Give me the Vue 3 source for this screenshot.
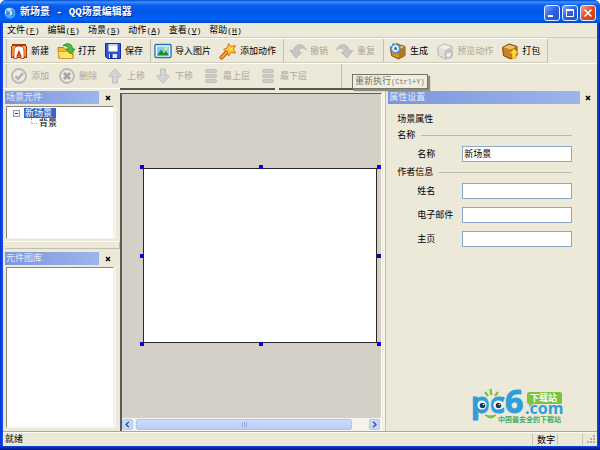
<script setup>
import { ref } from 'vue'

const menus = [
  ['文件', 'F'], ['编辑', 'E'], ['场景', 'S'], ['动作', 'A'], ['查看', 'V'], ['帮助', 'H'],
]

const cube = (a, b, c, s) =>
  `<path d="M1.500 5.500 8 2l8 2.500v9l-6.500 3.500-7-3.500z" fill="${b}" stroke="${s}" stroke-linejoin="round"/><path d="M2.500 5.500 8 2.800l7 2-5.500 2.700z" fill="${a}"/><path d="M10 8v8.500l5.500-3V5z" fill="${c}"/>`
const undoPath = 'M17.500 8C15 1 6.500.5 4.500 8.500H1L7 16l5.500-5.500-3-1C10.500 5.500 14 5 17.500 8z'
const layers = '<g fill="#c9c9c6" stroke="#b8b8b4" stroke-width=".8"><rect x="3.500" y="2.500" width="11" height="3" rx="1"/><rect x="3.500" y="7.500" width="11" height="3" rx="1"/><rect x="3.500" y="12.500" width="11" height="3" rx="1"/></g>'

const icons = {
  create: '<path d="M1 4h1V2h14v2h1v12H1z" fill="#a83414"/><path d="M2 4h14v11H2z" fill="#e87818"/><path d="M2.500 4h3v10h-3zM12.500 4h3v10h-3z" fill="#f8b838"/><path d="M4 16.500V9q0-5 5-5t5 5v7.500h-3V13H7v3.500z" fill="#fff" stroke="#a83010" stroke-width=".8"/><path d="M9 6.500 7 13h4z" fill="#d04018"/><circle cx="9" cy="8" r="1" fill="#fff"/>',
  open: '<path d="M1 5.500h5.500l1.500 2h8v9H2z" fill="#f4bc28" stroke="#bd8410"/><path d="M2.500 16.500 1 9.500h13.500l1.500 7z" fill="#ffe368" stroke="#c8941c" stroke-width=".8"/><path d="M6 3.500c5-3.500 9.500-1.500 9.500 3.500H18l-4.500 5L9 7h2.500c0-2-2-3.500-5.500-3.500z" fill="#4cc03c" stroke="#208020" stroke-width=".8"/>',
  save: '<path d="M1.500 1.500h15v15H3.500l-2-2z" fill="#2c58d8" stroke="#182c98"/><path d="M4.500 2h9v7.500h-9z" fill="#fff"/><path d="M5 2h8v2H5z" fill="#b8d4ff"/><path d="M5 12h8v4H5z" fill="#dce4f4"/><path d="M6 12h2.500v4H6z" fill="#203c78"/>',
  image: '<rect x="1" y="2.500" width="16" height="13" rx="1" fill="#fff" stroke="#2870b8" stroke-width="1.400"/><path d="M3 4.500h12v9H3z" fill="#80d0f4"/><path d="m3 13.500 4-6 3 4 2-2.500 3 4.500z" fill="#18902c"/><circle cx="12" cy="6.500" r="1.700" fill="#ffe040"/>',
  wand: '<path d="m2.500 15.500 6-6" stroke="#b85818" stroke-width="4" stroke-linecap="round"/><path d="m2.500 15.500 6-6" stroke="#f8a838" stroke-width="2" stroke-linecap="round"/><path d="m9.500 1.500 2.500 3 4.500-1-2 4 2 3.500-4.500-.5-2.500 3.500-1-4.500-4-2 4-2z" fill="#ffc828" stroke="#d86418" stroke-width=".9"/><path d="m10 5.500 1.500 1 2-1-.5 3z" fill="#fff2a0"/>',
  undo: `<path d="${undoPath}" fill="#c4c6c9" stroke="#aeb0b4" stroke-width=".8"/>`,
  redo: `<path d="${undoPath}" transform="matrix(-1 0 0 1 18 0)" fill="#c4c6c9" stroke="#aeb0b4" stroke-width=".8"/>`,
  build: cube('#f6d070', '#d99524', '#b87518', '#805010') + '<circle cx="6.500" cy="6.500" r="4.500" fill="#e4f2ff" stroke="#3878c8" stroke-width="2" stroke-dasharray="2.200 1.300"/><circle cx="6.500" cy="6.500" r="4" fill="#e4f2ff" stroke="#4888d0"/><circle cx="6.500" cy="6.500" r="1.500" fill="#386cb0"/>',
  preview: cube('#eeeeeb', '#dededc', '#c8c8c8', '#b4b4b4') + '<circle cx="12.500" cy="12.500" r="3.800" fill="#d0d0d2" stroke="#b0b0b2"/><path d="m11 12.500 1 1.500 2.500-3" fill="none" stroke="#fff" stroke-width="1.400"/>',
  pack: cube('#efc260', '#ca8120', '#a86414', '#75420e') + '<path d="m13 6.500 4.500 5H15V16h-4v-4.500H8.500z" fill="#ffdc38" stroke="#e09010" stroke-width=".8"/>',
  check: '<circle cx="9" cy="9" r="7" fill="#ecebe2" stroke="#b8b8b8" stroke-width="1.800"/><path d="m5.500 9 2.500 3 5-6" fill="none" stroke="#b0b0b0" stroke-width="2.200"/>',
  cross: '<circle cx="9" cy="9" r="7" fill="#ecebe2" stroke="#b8b8b8" stroke-width="1.800"/><path d="m6 6 6 6m0-6-6 6" stroke="#a6a6a6" stroke-width="3"/>',
  up: '<path d="M9 2 3 8.500 4.500 10l2-1v7h5V9l2 1L15 8.500z" fill="#d4d5d6" stroke="#bcbdbe"/>',
  down: '<path d="M9 16 3 9.500 4.500 8l2 1V2h5v7l2-1L15 9.500z" fill="#d4d5d6" stroke="#bcbdbe"/>',
  top: layers,
  bottom: layers,
}

const mainTools = [
  [['create', '新建'], ['open', '打开'], ['save', '保存']],
  [['image', '导入图片'], ['wand', '添加动作']],
  [['undo', '撤销', true], ['redo', '重复', true]],
  [['build', '生成'], ['preview', '预览动作', true], ['pack', '打包']],
]
const layerTools = [
  ['check', '添加'], ['cross', '删除'], ['up', '上移'], ['down', '下移'], ['top', '最上层'], ['bottom', '最下层'],
]
const handles = ['nw', 'n', 'ne', 'w', 'e', 'sw', 's', 'se']

const sceneName = ref('新场景')
const author = ref([
  { id: 'author', label: '姓名', value: '' },
  { id: 'email', label: '电子邮件', value: '' },
  { id: 'homepage', label: '主页', value: '' },
])
</script>

<template>
  <div class="window">
    <header class="titlebar">
      <svg class="app-icon" viewBox="0 0 12 12">
        <circle cx="6" cy="6" r="5.500" fill="#48a8f0" />
        <circle cx="5" cy="5" r="4" fill="#b8e4ff" />
        <path d="M3 3v5l2-3v4M7 3c3 1 3 5 0 6" fill="none" stroke="#2478d0" stroke-width="1.200" />
      </svg>
      <h1>新场景 <span>-</span> <span>QQ</span>场景编辑器</h1>
      <button class="win-btn" aria-label="最小化"><svg viewBox="0 0 14 14"><path d="M3 10h5" stroke="#fff" stroke-width="2" /></svg></button>
      <button class="win-btn" aria-label="最大化"><svg viewBox="0 0 14 14"><path d="M3.500 4v6.500h7V4" fill="none" stroke="#fff" /><path d="M3 4h8" stroke="#fff" stroke-width="2" /></svg></button>
      <button class="win-btn close" aria-label="关闭"><svg viewBox="0 0 14 14"><path d="m3.500 3.500 7 7m0-7-7 7" stroke="#fff" stroke-width="1.600" /></svg></button>
    </header>

    <div class="body">
      <nav class="menubar">
        <button v-for="[name, key] in menus" :key="key">{{ name }}<span class="key">(<u>{{ key }}</u>)</span></button>
      </nav>

      <div class="toolbar main-tools">
        <div v-for="(group, i) in mainTools" :key="i" class="group">
          <button v-for="[icon, label, off] in group" :key="icon" class="tool" :disabled="off">
            <svg viewBox="0 0 18 18" v-html="icons[icon]"></svg>{{ label }}
          </button>
        </div>
      </div>

      <div class="toolbar layer-tools">
        <div class="group">
          <button v-for="[icon, label] in layerTools" :key="icon" class="tool" disabled>
            <svg viewBox="0 0 18 18" v-html="icons[icon]"></svg>{{ label }}
          </button>
        </div>
        <div class="tooltip" role="tooltip">重新执行<span>(Ctrl+Y)</span></div>
      </div>

      <main class="work">
        <aside class="left">
          <section class="dock scene">
            <div class="dock-head"><h2>场景元件</h2><button aria-label="关闭"><svg viewBox="0 0 6 6"><path d="m1 1 4 4m0-4-4 4" stroke="#000" stroke-width="1.500" /></svg></button></div>
            <div class="list">
              <div class="node root">
                <button class="toggle" aria-label="折叠"></button>
                <span class="selected">新场景</span>
              </div>
              <div class="node child"><i></i><span>背景</span></div>
            </div>
          </section>
          <div class="sash"></div>
          <section class="dock library">
            <div class="dock-head"><h2>元件图库</h2><button aria-label="关闭"><svg viewBox="0 0 6 6"><path d="m1 1 4 4m0-4-4 4" stroke="#000" stroke-width="1.500" /></svg></button></div>
            <div class="list"></div>
          </section>
        </aside>

        <section class="center">
          <div class="edge"><i></i><i></i></div>
          <div class="stage">
            <div class="view">
              <div class="frame">
                <div class="sheet"></div>
                <i v-for="h in handles" :key="h" class="handle" :class="h"></i>
              </div>
            </div>
            <div class="scroll">
              <button aria-label="向左"><svg viewBox="0 0 10 10"><path d="M6.500 2 3.500 5l3 3" fill="none" stroke="#3c5c98" stroke-width="1.800" /></svg></button>
              <div class="track"><div class="thumb"><i></i><i></i><i></i></div></div>
              <button aria-label="向右"><svg viewBox="0 0 10 10"><path d="M3.500 2l3 3-3 3" fill="none" stroke="#3c5c98" stroke-width="1.800" /></svg></button>
            </div>
          </div>
        </section>

        <aside class="right">
          <div class="dock-head"><h2>属性设置</h2><button aria-label="关闭"><svg viewBox="0 0 6 6"><path d="m1 1 4 4m0-4-4 4" stroke="#000" stroke-width="1.500" /></svg></button></div>
          <form class="props" @submit.prevent>
            <h3>场景属性</h3>
            <div class="legend">名称</div>
            <div class="field"><label for="scene">名称</label><input id="scene" v-model="sceneName" type="text"></div>
            <div class="legend">作者信息</div>
            <div v-for="f in author" :key="f.id" class="field"><label :for="f.id">{{ f.label }}</label><input :id="f.id" v-model="f.value" type="text"></div>
          </form>
          <svg class="logo" viewBox="0 0 94 38">
            <path d="m14 7 3 4M19.500 4l1 6M27 7l-3 4" fill="none" stroke="#7cc242" stroke-width="2.200" />
            <path d="M14 30q6 6 11 0-6 2-11 0z" fill="#7cc242" stroke="#7cc242" />
            <g fill="#2d9fdc" stroke="#2d9fdc" stroke-width="1" font-family="Open Sans, sans-serif" font-weight="700">
              <text x="0" y="28" font-size="29">p</text>
              <text x="19" y="28" font-size="29">c</text>
              <text x="34" y="28" font-size="32">6</text>
            </g>
            <circle cx="11" cy="20" r="4.500" fill="#fff" /><circle cx="11.500" cy="20.500" r="2.800" fill="#173a4c" /><circle cx="12.500" cy="19.500" r=".8" fill="#fff" />
            <circle cx="27" cy="20" r="4.500" fill="#fff" /><circle cx="27.500" cy="20.500" r="2.800" fill="#173a4c" /><circle cx="28.500" cy="19.500" r=".8" fill="#fff" />
            <path d="M58 7h31q2 0 2 2v8q0 2-2 2H62l-4 3v-3q-2 0-2-2V9q0-2 2-2z" fill="#7cc242" />
            <text x="59" y="16" font-size="9" font-weight="700" fill="#fff" font-family="Noto Sans CJK SC, sans-serif">下载站</text>
            <text x="54" y="29" font-size="16" font-weight="700" fill="#2d9fdc" font-family="Open Sans, sans-serif">.com</text>
            <text x="27" y="37" font-size="7" font-weight="700" fill="#48ab68" font-family="Noto Sans CJK SC, sans-serif">中国最安全的下载站</text>
          </svg>
        </aside>
      </main>

      <footer class="status">
        <span class="ready">就绪</span>
        <span class="cell">数字</span>
        <span class="cell blank"></span>
        <span class="cell blank"></span>
        <svg class="grip" viewBox="0 0 12 12"><path d="M9 3h2M6 6h2M9 6h2M3 9h2M6 9h2M9 9h2" stroke="#b2ae9c" stroke-width="2" /></svg>
      </footer>
    </div>
  </div>
</template>

<style>
body { margin: 0; }
</style>

<style scoped>
* { box-sizing: border-box; }
.window {
  display: flex;
  flex-direction: column;
  min-height: 100vh;
  padding: 0 3px 4px;
  background: linear-gradient(#0000, #0000 calc(100% - 4px), #0a34c0 calc(100% - 3px), #00138c), linear-gradient(90deg, #0831d9, #1054ec 3px, #1054ec calc(100% - 3px), #001ea0);
  border-radius: 6px 6px 0 0;
  overflow: hidden;
  font: 9px/12px "Noto Sans CJK SC", sans-serif;
  color: #000;
}
button { font: inherit; color: inherit; padding: 0; border: 0; background: none; display: block; }
svg { display: block; flex: none; }
h1, h2, h3 { margin: 0; font: inherit; }

.titlebar {
  display: flex;
  align-items: center;
  gap: 2px;
  height: 23px;
  margin: 0 -3px;
  padding: 2px 4px 0;
  background: linear-gradient(#0048d0, #3a92ff 2px, #0a60f0 5px, #0055e4 12px, #0064fa 19px, #0048cc);
}
.app-icon { width: 12px; height: 12px; }
h1 { flex: 1; padding-left: 2px; font-size: 10px; font-weight: 700; color: #fff; text-shadow: 1px 1px 0 #0a2c88; white-space: pre; font-family: "Liberation Mono", "Noto Sans CJK SC", monospace; }
h1 span { font-size: 11px; }
.win-btn { width: 16px; height: 16px; border: 1px solid #e6eefc; border-radius: 3px; background: linear-gradient(135deg, #7ca4f8, #2c60e4 50%, #2452cc); }
.win-btn svg { width: 14px; height: 14px; }
.win-btn.close { background: linear-gradient(135deg, #f0a088, #e04c24 50%, #c03c18); }

.body { flex: 1; display: flex; flex-direction: column; background: #ece9d8; }
.menubar { display: flex; gap: 8px; height: 15px; padding: 1px 4px; border-bottom: 1px solid #cfccbc; }
.menubar button { display: flex; }
.key { font: 8px/13px "Liberation Mono", monospace; }

.toolbar { display: flex; border-top: 1px solid #fff; height: 25px; }
.group { display: flex; align-items: center; gap: 8px; padding: 0 7px 0 3px; border-right: 1px solid #c2bfae; }
.group:first-child { margin-left: 3px; padding-left: 3px; border-left: 1px solid #c2bfae; }
.main-tools { border-bottom: 1px solid #cfccbc; align-self: flex-start; }
.main-tools .group:nth-child(n+3) { padding-left: 5px; }
.main-tools .group:nth-child(3) { padding-right: 8px; }
.layer-tools .group { gap: 9px; padding-right: 34px; }
.layer-tools { position: relative; }
.tool { display: flex; align-items: center; gap: 3px; white-space: nowrap; }
.tool svg { width: 18px; height: 18px; }
.tool:disabled { color: #aca899; }
.tooltip {
  position: absolute;
  left: 349px;
  top: 10px;
  z-index: 2;
  padding: 0 2px;
  border: 1px solid #77756a;
  background: #f0eee0;
  color: #777568;
  box-shadow: 2px 2px 1px #8e8c80;
  white-space: nowrap;
}
.tooltip span { font: 7px/12px "Liberation Mono", monospace; }

.work { flex: 1; display: grid; grid-template-columns: 117px minmax(0, 11fr) minmax(0, 9fr); }
.left { display: flex; flex-direction: column; border-top: 1px solid #fff; padding: 2px 0 3px; }
.dock { display: flex; flex-direction: column; padding: 0 5px 0 2px; }
.scene { height: 148px; }
.library { flex: 1; padding-top: 3px; }
.dock-head { display: flex; align-items: center; gap: 6px; }
.dock-head h2 { flex: 1; height: 13px; padding-left: 1px; background: linear-gradient(90deg, #7b96dc, #9db5ec); color: #e4ecfc; }
.dock-head button { width: 6px; height: 6px; }
.left .dock-head { padding-right: 4px; }
.list { flex: 1; margin: 2px 1px 0; padding: 1px 0; background: #fff; border: 1px solid #8a887c; border-right-color: #f4f2e8; border-bottom-color: #f4f2e8; box-shadow: 2px 0 0 #f6f4ea; }
.node { display: flex; align-items: center; height: 10px; line-height: 10px; }
.root { padding-left: 6px; gap: 4px; }
.toggle { width: 7px; height: 7px; border: 1px solid #8c9cb0; background: linear-gradient(#34445c, #34445c) center / 3px 1px no-repeat #f4f4ee; }
.selected { padding: 0 4px 0 1px; background: #316ac5; color: #fff; }
.child { padding-left: 24px; gap: 2px; }
.child i { width: 6px; height: 6px; margin-bottom: 4px; border: dotted #b0b0a8; border-width: 0 0 1px 1px; }
.sash { height: 8px; margin: 2px 0 0 2px; border: 1px solid #c2bfae; border-left: 0; border-top-color: #fff; }

.center { display: flex; flex-direction: column; min-width: 0; }
.edge { display: flex; gap: 4px; height: 5px; }
.edge i { flex: 2; height: 2px; background: #55534c; }
.edge i:first-child { flex: 3; }
.stage { flex: 1; display: flex; flex-direction: column; border: solid #5c5a52; border-width: 1px 0 0 2px; border-right: 1px solid #fff; }
.view { flex: 1; padding: 74px 2px 0 20px; background: #d4d0c8; }
.frame { position: relative; padding: 0 2px 0 1px; }
.sheet { height: 175px; background: #fff; border: 1px solid #282828; }
.handle { position: absolute; width: 4px; height: 4px; background: #0c00c8; margin: -2px; }
.nw, .n, .ne { top: -1px; }
.w, .e { top: 50%; }
.sw, .s, .se { top: calc(100% + 1px); }
.nw, .w, .sw { left: 0; }
.n, .s { left: 50%; }
.ne, .e, .se { left: 100%; }
.scroll { display: flex; height: 13px; padding: 1px 1px 1px 0; background: #f4f3ee; gap: 3px; }
.scroll button { width: 11px; height: 11px; border: 1px solid #b4c8f4; border-radius: 2px; background: #c8d8fc; }
.scroll button svg { width: 9px; height: 9px; }
.track { flex: 1; display: flex; padding-right: 14px; }
.thumb { flex: 1; display: flex; justify-content: center; align-items: center; gap: 1px; border: 1px solid #b0c4f4; border-radius: 2px; background: linear-gradient(#ccdafe, #b9ccfa); }
.thumb i { width: 1px; height: 5px; background: #98b0e4; }

.right { display: flex; flex-direction: column; margin-left: 3px; padding: 3px 6px 8px 2px; border-left: 1px solid #c2bfae; box-shadow: -2px 0 0 #f8f6ec; min-width: 0; }
.right .dock-head { gap: 5px; }
.props { display: flex; flex-direction: column; padding: 9px 19px 0 9px; }
.legend { display: flex; align-items: center; gap: 6px; margin-top: 4px; }
.legend::after { content: ""; flex: 1; height: 1px; background: #bcb9aa; }
.field { display: grid; grid-template-columns: 45px minmax(0, 1fr); align-items: center; height: 16px; margin: 5px 0 0 20px; }
.field + .field { margin-top: 8px; }
.field input { width: 100%; height: 16px; padding: 0 1px 2px; border: 1px solid #8ca8c8; background: #fff; font: inherit; color: #000; outline: 0; }
.logo { width: 94px; height: 38px; margin: auto 26px 0 auto; overflow: visible; }

.status { display: flex; align-items: center; height: 15px; padding: 0 1px 0 2px; border-top: 1px solid #aca899; box-shadow: inset 0 1px 0 #fbfaf4; }
.ready { flex: 1; }
.cell { width: 25px; padding-left: 4px; height: 11px; line-height: 11px; border-left: 1px solid #c6c3b4; }
.cell.blank:last-of-type { width: 1px; padding: 0; }
.grip { width: 12px; height: 12px; margin-left: 1px; }
</style>
